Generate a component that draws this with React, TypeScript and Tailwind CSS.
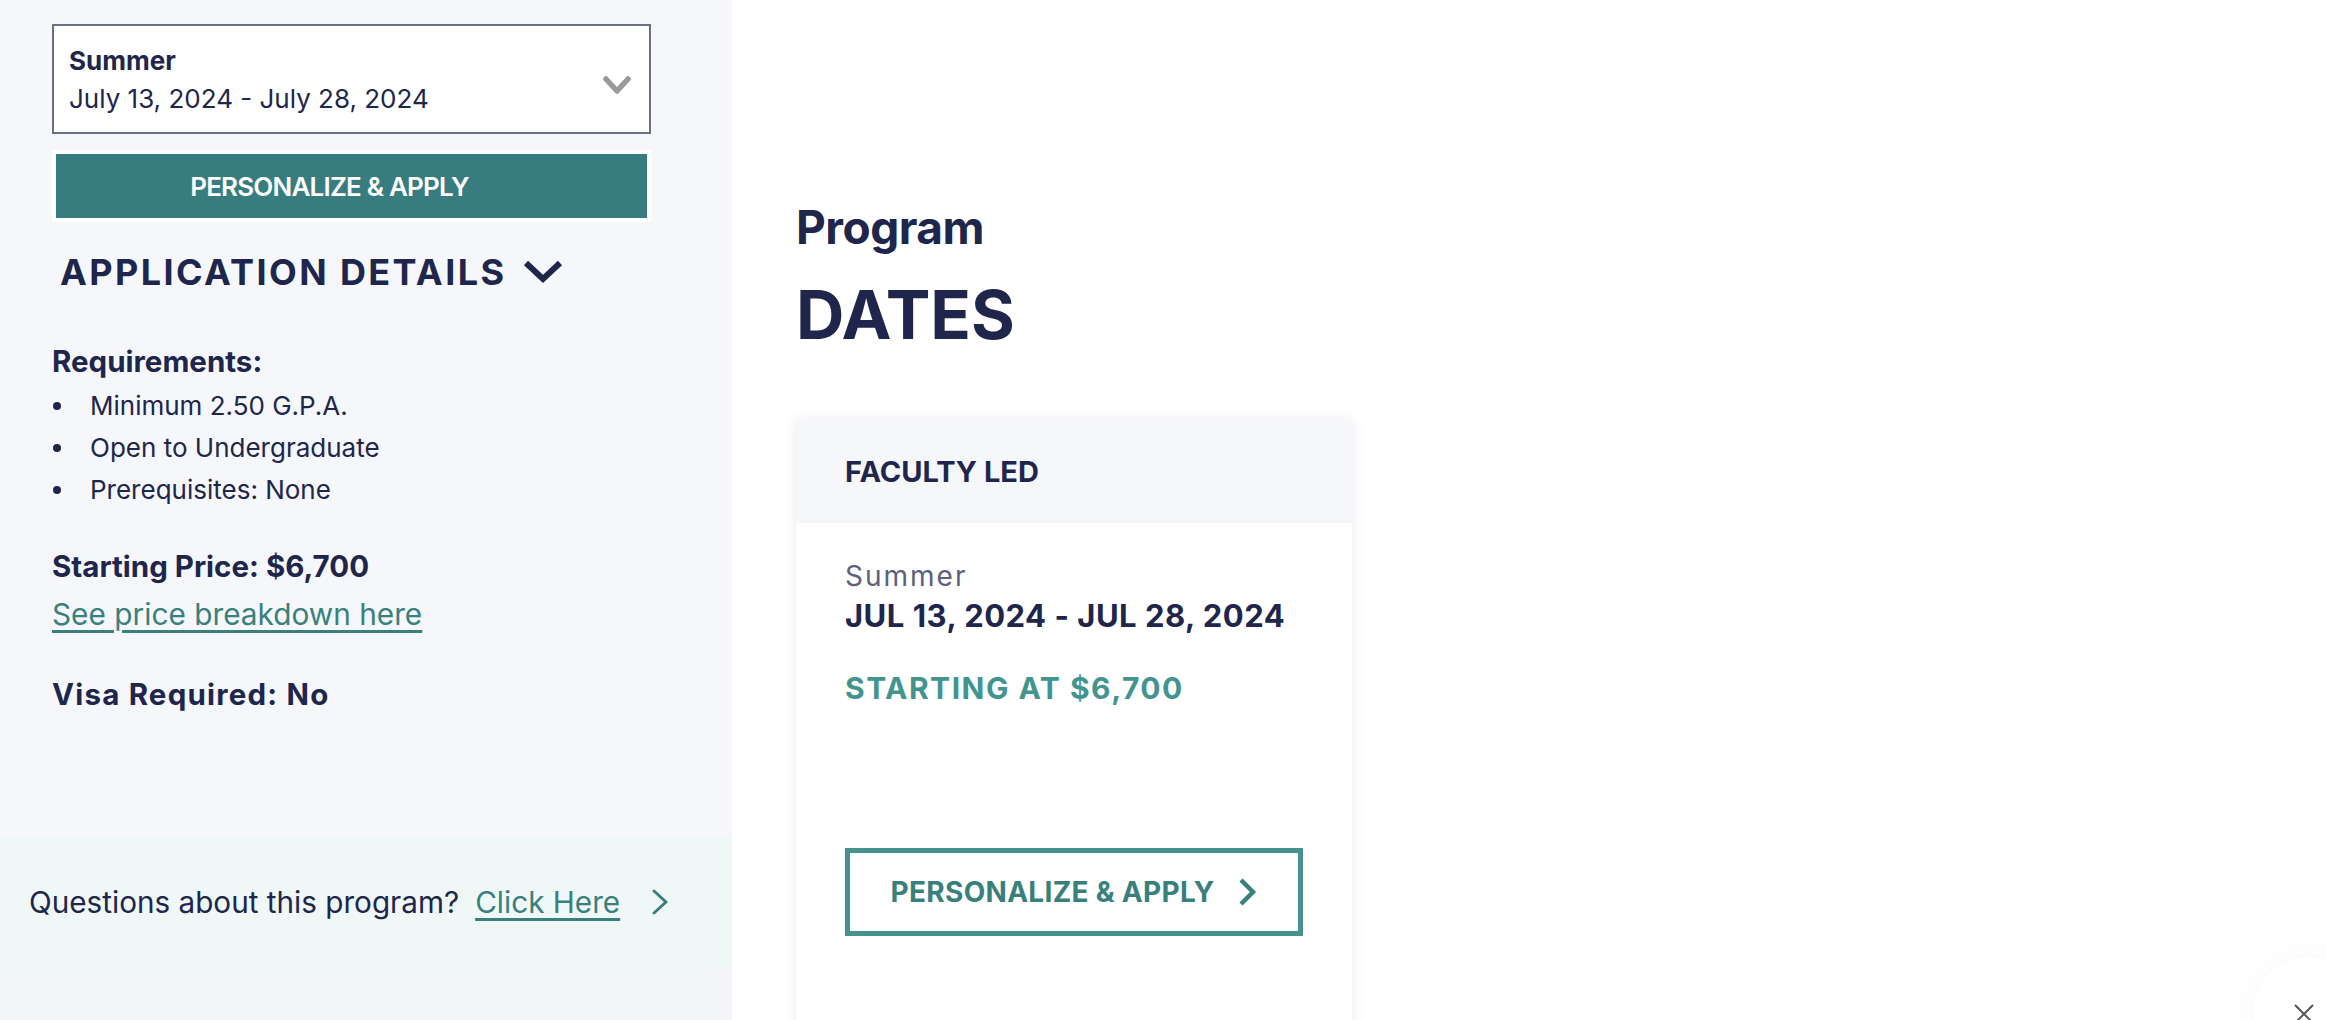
import React from "react";

function Chevron({ className, w, h, points, stroke, sw, cap = "round" }: { className?: string; w: number; h: number; points: string; stroke: string; sw: number; cap?: "round" | "butt" | "square" }) {
  return (
    <svg className={className} width={w} height={h} viewBox={`0 0 ${w} ${h}`} fill="none">
      <polyline points={points} stroke={stroke} strokeWidth={sw} strokeLinecap={cap} strokeLinejoin={cap === "round" ? "round" : "miter"} />
    </svg>
  );
}

export default function App() {
  return (
    <div className="relative flex h-[1020px] w-[2326px] overflow-hidden bg-white font-['Inter',sans-serif] text-[#20264b]">
      {/* Sidebar */}
      <aside className="flex w-[732px] shrink-0 flex-col bg-[#f5f7fb]">
        <div className="pl-[52px] pr-[81px] pt-[24px]">
          <div className="flex h-[110px] items-center justify-between border-2 border-[#6b7084] bg-white pl-[15px] pr-[17px]">
            <div className="mt-[2px] flex flex-col">
              <span className="text-[26px] font-bold leading-[38px]">Summer</span>
              <span className="text-[26px] leading-[38px]">July 13, 2024 - July 28, 2024</span>
            </div>
            <Chevron className="mt-[12px]" w={30} h={21} points="4,4 15,16 26,4" stroke="#9a9a9a" sw={5.5} />
          </div>
          <div className="mt-[16px] bg-white p-[4px]">
            <div className="flex h-[64px] w-full items-center justify-center bg-[#377c7e] pr-[44px] text-[26px] font-semibold tracking-[-0.8px] text-white">
              PERSONALIZE &amp; APPLY
            </div>
          </div>
          <div className="ml-[8px] mt-[28px] flex items-center gap-[17px]">
            <span className="whitespace-nowrap text-[36px] font-bold leading-[44px] tracking-[2.4px]">APPLICATION DETAILS</span>
            <Chevron w={40} h={24} points="3,3 20,19 37,3" stroke="#20264b" sw={6} cap="butt" />
          </div>
          <div className="mt-[47px] text-[29.5px] font-bold leading-[40px]">Requirements:</div>
          <ul className="mt-[4px]">
            {["Minimum 2.50 G.P.A.", "Open to Undergraduate", "Prerequisites: None"].map((t) => (
              <li key={t} className="flex items-center text-[26px] leading-[42px]">
                <span className="ml-[1px] h-[8px] w-[8px] rounded-full bg-[#20264b]" />
                <span className="ml-[29px]">{t}</span>
              </li>
            ))}
          </ul>
          <div className="mt-[35px] text-[29.5px] font-bold leading-[40px]">Starting Price: $6,700</div>
          <div className="mt-[8px] text-[29.8px] leading-[40px] text-[#3a807c] underline decoration-[3px] underline-offset-[5px]">
            See price breakdown here
          </div>
          <div className="mt-[40px] text-[29.5px] font-bold leading-[40px] tracking-[1.2px]">Visa Required: No</div>
        </div>
        <div className="mt-auto flex h-[130px] items-center bg-[#eff8f6] pl-[29px]">
          <span className="text-[29.7px] leading-[40px]">Questions about this program?</span>
          <span className="ml-[16px] text-[29.7px] leading-[40px] text-[#3a7f7c] underline decoration-[3px] underline-offset-[5px]">Click Here</span>
          <Chevron className="ml-[31px]" w={18} h={26} points="3,2 15,13 3,24" stroke="#3a7f7c" sw={3} />
        </div>
        <div className="h-[53px] bg-[#f3f5f9]" />
      </aside>

      {/* Main */}
      <main className="flex-1 pl-[64px] pt-[199px]">
        <h2 className="text-[46px] font-bold leading-[56px] tracking-[-0.5px]">Program</h2>
        <h1 className="mt-[20px] text-[67px] font-bold leading-[80px]">DATES</h1>
        <div className="mt-[65px] w-[556px] bg-white shadow-[0_0_14px_rgba(20,30,60,0.08)]">
          <div className="flex h-[103px] items-center bg-[#f6f7fb] pl-[49px] text-[29px] font-bold">FACULTY LED</div>
          <div className="pb-[300px] pl-[49px] pt-[35px]">
            <div className="text-[28px] leading-[36px] tracking-[2px] text-[#5c607b]">Summer</div>
            <div className="mt-[2px] whitespace-nowrap text-[31px] font-bold leading-[40px] tracking-[0.5px]">JUL 13, 2024 - JUL 28, 2024</div>
            <div className="mt-[34px] text-[30px] font-bold leading-[36px] tracking-[1.5px] text-[#42958f]">STARTING AT $6,700</div>
            <div className="mt-[142px] flex h-[88px] w-[458px] items-center justify-center gap-[23px] border-[5px] border-[#45928f]">
              <span className="text-[28px] font-bold tracking-[0.3px] text-[#37807c]">PERSONALIZE &amp; APPLY</span>
              <Chevron w={20} h={28} points="4,2 16,14 4,26" stroke="#37807c" sw={4.5} cap="butt" />
            </div>
          </div>
        </div>
      </main>

      {/* Floating close button */}
      <div className="absolute left-[2253px] top-[958px] flex h-[112px] w-[112px] items-start justify-center rounded-full bg-white pt-[45px] shadow-[0_0_30px_rgba(0,0,0,0.035)]">
        <svg width="22" height="22" viewBox="0 0 22 22" className="-ml-[10px]">
          <path d="M2 2 L20 20 M20 2 L2 20" stroke="#555" strokeWidth="2" />
        </svg>
      </div>
    </div>
  );
}
